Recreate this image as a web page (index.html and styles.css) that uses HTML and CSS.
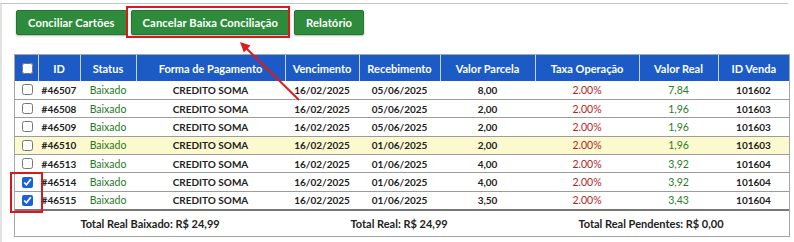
FILE: index.html
```html
<!DOCTYPE html>
<html lang="pt-BR">
<head>
<meta charset="utf-8">
<title>Conciliação</title>
<link rel="stylesheet" href="styles.css">
</head>
<body>
<div class="page">
  <div class="panel">
    <div class="toolbar">
      <button class="btn">Conciliar Cartões</button>
      <button class="btn">Cancelar Baixa Conciliação</button>
      <button class="btn">Relatório</button>
    </div>
    <div class="grid-box">
      <table class="grid">
        <colgroup>
          <col class="c-chk"><col class="c-id"><col class="c-st"><col class="c-fp"><col class="c-ve">
          <col class="c-re"><col class="c-vp"><col class="c-tx"><col class="c-vr"><col class="c-iv">
        </colgroup>
        <thead>
          <tr>
            <th><input type="checkbox" class="chk"></th>
            <th>ID</th><th>Status</th><th>Forma de Pagamento</th><th>Vencimento</th>
            <th>Recebimento</th><th>Valor Parcela</th><th>Taxa Operação</th><th>Valor Real</th><th>ID Venda</th>
          </tr>
        </thead>
        <tbody>
          <tr>
            <td><input type="checkbox" class="chk"></td><td>#46507</td><td class="ok">Baixado</td><td>CREDITO SOMA</td>
            <td>16/02/2025</td><td>05/06/2025</td><td>8,00</td><td class="tax">2.00%</td><td class="real">7,84</td><td>101602</td>
          </tr>
          <tr>
            <td><input type="checkbox" class="chk"></td><td>#46508</td><td class="ok">Baixado</td><td>CREDITO SOMA</td>
            <td>16/02/2025</td><td>05/06/2025</td><td>2,00</td><td class="tax">2.00%</td><td class="real">1,96</td><td>101603</td>
          </tr>
          <tr>
            <td><input type="checkbox" class="chk"></td><td>#46509</td><td class="ok">Baixado</td><td>CREDITO SOMA</td>
            <td>16/02/2025</td><td>05/06/2025</td><td>2,00</td><td class="tax">2.00%</td><td class="real">1,96</td><td>101603</td>
          </tr>
          <tr class="hl">
            <td><input type="checkbox" class="chk"></td><td>#46510</td><td class="ok">Baixado</td><td>CREDITO SOMA</td>
            <td>16/02/2025</td><td>01/06/2025</td><td>2,00</td><td class="tax">2.00%</td><td class="real">1,96</td><td>101603</td>
          </tr>
          <tr>
            <td><input type="checkbox" class="chk"></td><td>#46513</td><td class="ok">Baixado</td><td>CREDITO SOMA</td>
            <td>16/02/2025</td><td>01/06/2025</td><td>4,00</td><td class="tax">2.00%</td><td class="real">3,92</td><td>101604</td>
          </tr>
          <tr>
            <td><input type="checkbox" class="chk" checked></td><td>#46514</td><td class="ok">Baixado</td><td>CREDITO SOMA</td>
            <td>16/02/2025</td><td>01/06/2025</td><td>4,00</td><td class="tax">2.00%</td><td class="real">3,92</td><td>101604</td>
          </tr>
          <tr class="last">
            <td><input type="checkbox" class="chk" checked></td><td>#46515</td><td class="ok">Baixado</td><td>CREDITO SOMA</td>
            <td>16/02/2025</td><td>01/06/2025</td><td>3,50</td><td class="tax">2.00%</td><td class="real">3,43</td><td>101604</td>
          </tr>
        </tbody>
      </table>
      <div class="totals">
        <span>Total Real Baixado: R$ 24,99</span>
        <span>Total Real: R$ 24,99</span>
        <span>Total Real Pendentes: R$ 0,00</span>
      </div>
    </div>
  </div>
  <div class="mark mark-btn"></div>
  <div class="mark mark-chk"></div>
  <svg class="arrow" width="794" height="242" viewBox="0 0 794 242">
    <line x1="299" y1="100" x2="246" y2="48" stroke="#e01b1b" stroke-width="2"/>
    <polygon points="240,42 250.5,45.6 243.8,52.4" fill="#e01b1b"/>
  </svg>
</div>
</body>
</html>
```

FILE: styles.css
```css
* { box-sizing: border-box; }
body {
  margin: 0;
  background: #fff;
  font-family: Lato, "Noto Sans", "Liberation Sans", sans-serif;
  color: #1e1e1e;
}
.page {
  position: relative;
  width: 794px;
  height: 242px;
  overflow: hidden;
}
.panel {
  margin-top: 3px;
  margin-right: 6px;
  height: 239px;
  border-top: 1px solid #c4c4c4;
  border-left: 2px solid #e2e2e2;
  padding: 6px 0 0 12px;
}
.toolbar {
  display: flex;
  gap: 4px;
  padding-left: 2px;
}
.btn {
  flex: none;
  height: 25px;
  padding: 0 11px;
  border: 1px solid #277432;
  border-radius: 2px;
  background: #2f8b3c;
  color: #fff;
  font-family: inherit;
  font-size: 11.2px;
  font-weight: 700;
  letter-spacing: 0.1px;
  white-space: nowrap;
  box-shadow: 0 1px 2px rgba(0, 0, 0, 0.3);
}
.grid-box {
  margin-top: 19px;
  width: 776px;
  border: 1px solid #a6a6a6;
}
.grid {
  width: 774px;
  border-collapse: collapse;
  table-layout: fixed;
  font-size: 10px;
}
.c-chk { width: 23px; }
.c-id { width: 42px; }
.c-st { width: 56px; }
.c-fp { width: 149px; }
.c-ve { width: 74px; }
.c-re { width: 81px; }
.c-vp { width: 95px; }
.c-tx { width: 104px; }
.c-vr { width: 79px; }
.c-iv { width: 71px; }
.grid th {
  height: 26px;
  padding: 0;
  background: #1c5bc6;
  color: #fff;
  font-size: 11px;
  font-weight: 700;
  text-align: center;
  border-left: 1px solid #c5d4f0;
}
.grid th:first-child { border-left: none; }
.grid td {
  height: 18.4px;
  padding: 0;
  text-align: center;
  font-weight: 700;
  color: #222;
  border-bottom: 1px solid #9c9c9c;
  white-space: nowrap;
}
.grid td.ok { color: #1f7a1f; font-weight: 400; font-size: 10.5px; }
.grid td.tax { color: #b31e1e; font-weight: 400; font-size: 10.5px; }
.grid td.real { color: #2b7a2b; font-weight: 400; font-size: 10.5px; }
.grid tr.hl td { background: #fcf9cf; }
.grid tr.last td { border-bottom: 2px solid #777; }
.chk {
  display: block;
  width: 11px;
  height: 11px;
  margin: 0 0 0 7px;
  accent-color: #1a62d8;
}
.totals {
  height: 25px;
  display: flex;
  justify-content: space-around;
  align-items: center;
  font-size: 11px;
  font-weight: 700;
  color: #222;
}
.mark {
  position: absolute;
  border: 2px solid #d7191c;
}
.mark-btn {
  left: 126px;
  top: 6px;
  width: 164px;
  height: 32px;
}
.mark-chk {
  left: 10px;
  top: 172px;
  width: 33px;
  height: 41px;
}
.arrow {
  position: absolute;
  left: 0;
  top: 0;
  pointer-events: none;
}
```
